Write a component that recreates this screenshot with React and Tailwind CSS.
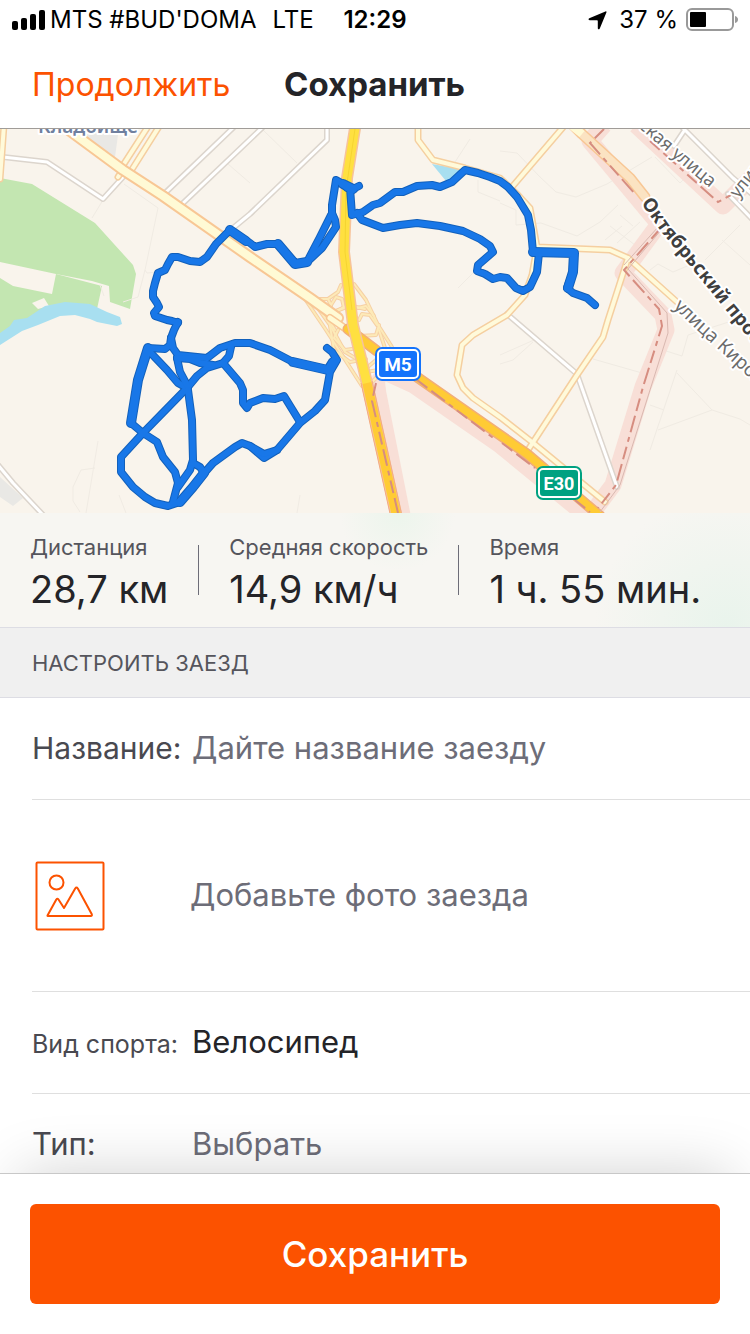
import React from "react";

const TRACKS = [
  "M178 323L172 321L167 320L155 316L154 313L159 307L157 303L153 297L153 291L155 283L158 273L165 270L168 264L172 257L178 257L190 261L200 262L207 257L216 244L224 236L230 230L250 243L255 247L267 244L278 244L295 264L307 262L320 237L332 213L332 205L336 180L343 184L347 188L353 189L359 186",
  "M307 262L322 248L336 227L335 220L332 213",
  "M350 188L352 215L363 212L373 205L380 203L395 192L403 192L417 186L432 185L440 187L452 182L465 170L478 173L490 177L500 181L508 187L517 197L528 215L531 230L533 252L574 253L573 272L567 288L573 293L587 298L595 305",
  "M539 253L537 272L530 287L523 291L516 288L507 278L500 277L493 279L485 274L477 271L478 265L493 252L490 246L480 239L463 231L440 226L417 223L400 225L383 228L362 220L357 213",
  "M178 322L174 330L171 338L170 345L165 349L148 348L143 364L138 380L131 423L143 433L157 442L163 457L175 472L178 483L173 502",
  "M171 338L173 348L178 355L207 358L220 348L235 343L250 343L270 350L293 362L328 370",
  "M327 348L332 352L337 360L330 372L325 400L315 411L300 423L277 450L264 458L250 446L242 443L235 447L213 463L206 471L193 487L180 502L168 506L155 503L145 497L133 487L121 472L121 457L143 433L187 388L197 376L207 368L223 363L229 356L231 347",
  "M148 350L167 370L178 383L187 388",
  "M177 358L180 372L188 387",
  "M177 358L190 359L200 363L213 365",
  "M188 390L192 420L193 460L190 470L178 487",
  "M193 463L200 467L204 473",
  "M223 363L240 383L243 390L243 403L247 408L250 403L263 398L275 399L284 396L300 422",
  "M250 446L264 454L277 450",
];

const WIDE_TRACKS = [
  "M533 252L574 253L573 272L568 288",
  "M148 348L143 364L138 380L131 423",
  "M204 473L193 487L180 502",
  "M293 362L328 370L333 362",
  "M230 230L246 241",
  "M278 244L295 264L307 262",
  "M343 184L353 189",
];

const WHITE_ROADS = [
  "M3 157L47 162L103 199L123 177",
  "M163 195L236 125",
  "M180 206L265 125",
  "M233 228L250 214L327 140L327 125",
  "M-2 465L13 483L44 516",
  "M507 314L577 374L617 487",
  "M680 125L733 178L752 194",
  "M684 131L674 146",
  "M728 194L752 219",
];

const MINOR_ROADS = [
  "M4 125L0 179",
  "M120 170L149 125",
  "M131 171L160 125",
  "M118 177L124 168",
  "M418 125L418 140L433 160L465 168L500 178L518 195L530 208L537 247L610 250L628 258L677 302",
  "M565 125L512 187",
  "M537 247L532 275L525 295L507 315L473 335L462 345L457 375L463 388L473 398L500 417L532 442L605 502",
  "M528 450L577 375L603 337L608 320L628 258",
];

const RAMPS = [
  "M341 285L338 292L328 299L312 299",
  "M305 299L326 330L362 386",
  "M313 301L330 325L345 352L362 362",
  "M328 299L331 305L329 320L335 330",
  "M331 305L336 297L342 299L344 308L333 312",
  "M354 284L366 300L378 325L392 347",
  "M358 308L366 306L374 316",
  "M359 320L362 314L370 315L377 325",
  "M337 311L348 305L365 309",
  "M330 326L334 350L350 362L366 359",
  "M338 330L334 338L345 350L352 349",
  "M360 336L376 335L379 325",
  "M362 372L376 360L385 348L379 330",
  "M366 372L385 369",
  "M370 384L380 374",
];

const FAINT = [
  "M103 200L92 218M124 184L158 208L145 270L147 273L158 272M123 302L138 297L145 270M100 285L104 296",
  "M98 441L86 513M95 468L81 470L73 487L73 501L80 512M119 495L126 513M263 130L297 163M228 164L250 183",
  "M300 495L297 513M470 139L455 162M500 151L517 153L540 177L556 192L576 197L607 184L652 157M500 203L516 210L516 225L541 223L577 236L600 222L618 205",
  "M458 288L476 270M478 180L478 192L500 201M500 355L534 340M500 364L513 360L533 342M593 359L642 373",
  "M663 350L682 356M677 370L650 450M650 405L664 410M677 373L712 410L740 419L750 425M712 410L658 430M682 356L688 335L735 320",
  "M610 226L635 245M620 215L633 226M605 240L622 226M617 243L640 222M650 270L658 264L673 272L692 264M722 240L750 265M740 225L705 260M655 157L680 183L693 170",
];

function Roads({ paths, casing, fill, outer, inner }) {
  return (
    <g fill="none" strokeLinejoin="round" strokeLinecap="round">
      {paths.map((d) => (
        <path key={"c" + d} d={d} stroke={casing} strokeWidth={outer} />
      ))}
      {paths.map((d) => (
        <path key={"f" + d} d={d} stroke={fill} strokeWidth={inner} />
      ))}
    </g>
  );
}

function RouteMap() {
  return (
    <svg
      viewBox="0 129 750 384"
      preserveAspectRatio="xMidYMid slice"
      className="block h-96 w-full bg-[#f9f4ec]"
      role="img"
      aria-label="Карта заезда"
    >
      <defs>
        <path id="street-october" d="M641 203L662 233L690 266L760 352" />
        <path id="street-upper" d="M638 127L674 158L740 213" />
        <path id="street-kirov" d="M673 307L700 333L770 396" />
        <path id="street-side" d="M738 199L775 152" />
      </defs>

      <g fill="#e9e8e5">
        <path d="M78 129L118 129L118 135L115 157L85 137Z" />
        <path d="M0 477L23 498L13 506L0 497Z" />
      </g>
      <g fill="#c3e6b1">
        <path d="M0 178L32 184L95 223L133 265L136 274L130 309L110 302L109 286L92 281L56 274L0 262Z" />
        <path d="M56 274L102 286L97 309L66 306L40 316L0 336L0 278L13 286L52 294Z" />
      </g>
      <path fill="#f9f4ec" d="M38 309L32 303L44 298L49 306Z" />
      <path
        fill="#a8dff0"
        d="M0 333L10 326L14 320L27 318L45 306L65 302L90 304L107 312L120 317L122 324L117 326L97 322L90 319L75 315L60 316L38 325L22 331L0 345Z"
      />
      <path fill="#a8dff0" d="M432 164L460 169L457 181L446 181Z" />

      <g fill="none" stroke="#f0ebe3" strokeWidth="1">
        {FAINT.map((d) => (
          <path key={d} d={d} />
        ))}
      </g>

      <g fill="none" stroke="#f8dfd7" strokeLinejoin="round">
        <path strokeWidth="17" d="M604 125L590 141L659 224L623 273L663 315L666 330L643 387L613 485L592 513" />
        <path strokeWidth="17" d="M636 125L723 206L755 174" />
        <path strokeWidth="17" d="M376 384L403 520" />
        <path strokeWidth="20" d="M380 368L415 384L500 443L588 515" />
        <path strokeWidth="14" d="M380 410L378 380L384 372" />
      </g>

      <Roads paths={WHITE_ROADS} casing="#dcd5cd" fill="#ffffff" outer={6} inner={3} />
      <Roads paths={RAMPS} casing="#f6d0a4" fill="#fdeab8" outer={4} inner={2} />
      <Roads paths={MINOR_ROADS} casing="#f5cfa0" fill="#fffada" outer={7} inner={4} />
      <Roads paths={["M62 125L123 170L163 196L250 257L310 298L338 318"]} casing="#f8c795" fill="#fffad5" outer={12} inner={8} />
      <Roads paths={["M330 318L346 329"]} casing="#f8c795" fill="#fffad5" outer={8} inner={5} />
      <Roads paths={["M348 329L377 351L417 377L500 435L527 454L600 516"]} casing="#f2ae78" fill="#ffcb35" outer={11} inner={8} />
      <Roads paths={["M356 122L347 178L344 252L353 325L367 383L397 518"]} casing="#f7c39a" fill="#ffe040" outer={12} inner={9} />
      <path fill="none" stroke="#ffcb35" strokeWidth="9" d="M367 383L397 518" />
      <path fill="none" stroke="#f3ab80" strokeWidth="1" d="M361 383L391 518M372 381L402 516" />
      <path fill="none" stroke="#f5d431" strokeWidth="1" d="M355 129L346 190L345 252L352 310" />
      <Roads paths={["M570 122L582 134L630 178L645 197"]} casing="#f8c795" fill="#fbe3c2" outer={11} inner={8} />
      <path fill="none" stroke="#fffad5" strokeWidth="8" d="M567 122L582 134" />

      <g fill="none" stroke="#d9b8b0" strokeWidth="1">
        <path d="M662 229L628 269L667 313L668 333L620 485L600 512" />
        <path d="M659 226L624 265" />
      </g>
      <g fill="none" stroke="#d68d80" strokeWidth="2" strokeDasharray="13 5 17 5 5 5">
        <path d="M604 129L590 143L636 195" />
        <path d="M660 229L624 270L659 309L662 326L643 387L616 485L598 508" />
        <path d="M650 141L718 202L731 195" />
        <path d="M376 383L372 401L398 513" />
        <path d="M417 380L496 440M502 443L535 468M575 500L590 512" />
      </g>

      <g fill="none" strokeLinecap="round" strokeLinejoin="round">
        {TRACKS.map((d) => (
          <path key={"o" + d} d={d} stroke="#1260bb" strokeWidth="8" />
        ))}
        {WIDE_TRACKS.map((d) => (
          <path key={"wo" + d} d={d} stroke="#1260bb" strokeWidth="10" />
        ))}
        {TRACKS.map((d) => (
          <path key={"i" + d} d={d} stroke="#1877e8" strokeWidth="6" />
        ))}
        {WIDE_TRACKS.map((d) => (
          <path key={"wi" + d} d={d} stroke="#1877e8" strokeWidth="8" />
        ))}
      </g>

      <g fontFamily='"Noto Sans", sans-serif' stroke="#ffffff" strokeWidth="4" strokeLinejoin="round" paintOrder="stroke">
        <text x="38" y="133" fontSize="19" fontWeight="600" fill="#70809f">Кладбище</text>
        <text fontSize="19" fontWeight="700" fill="#3f3f3f">
          <textPath href="#street-october">Октябрьский проспект</textPath>
        </text>
        <text fontSize="18" fill="#6c6c6c">
          <textPath href="#street-upper">ская улица</textPath>
        </text>
        <text fontSize="19" fill="#6c6c6c">
          <textPath href="#street-kirov">улица Кирова</textPath>
        </text>
        <text fontSize="18" fill="#6c6c6c">
          <textPath href="#street-side">улица</textPath>
        </text>
      </g>

      <g>
        <rect x="375" y="347" width="46" height="34" rx="7" fill="#1473fb" />
        <rect x="378" y="350" width="40" height="28" rx="4" fill="none" stroke="#ffffff" strokeWidth="2" />
        <text x="398" y="371" fontSize="19" fontWeight="700" fontFamily="Roboto, sans-serif" textAnchor="middle" fill="#ffffff">M5</text>
        <rect x="536" y="466" width="46" height="34" rx="7" fill="#00a181" />
        <rect x="539" y="469" width="40" height="28" rx="4" fill="none" stroke="#ffffff" strokeWidth="2" />
        <text x="559" y="490" fontSize="18" fontWeight="700" fontFamily="Roboto, sans-serif" textAnchor="middle" fill="#ffffff">E30</text>
      </g>
    </svg>
  );
}

function StatusBar() {
  return (
    <div className="flex h-10 items-center px-3 text-[24px] leading-10 text-black">
      <div className="flex flex-1 items-center whitespace-nowrap">
        <svg width="34" height="20" viewBox="0 0 34 20" aria-hidden="true">
          <rect x="0" y="11" width="6" height="9" rx="2" />
          <rect x="9" y="8" width="6" height="12" rx="2" />
          <rect x="18" y="4" width="6" height="16" rx="2" />
          <rect x="27" y="0" width="6" height="20" rx="2" />
        </svg>
        <span className="ml-1">MTS #BUD'DOMA</span>
        <span className="ml-4">LTE</span>
      </div>
      <div className="font-semibold">12:29</div>
      <div className="flex flex-1 items-center justify-end whitespace-nowrap">
        <svg width="19" height="19" viewBox="0 0 19 19" aria-hidden="true">
          <path d="M17.4 0.4Q18.9 0 18.4 1.500L11.800 17.400Q10.600 19.200 9.800 17.400V10Q9.800 9.200 9 9.200H1.600Q-0.500 8.600 1.300 7.200Z" />
        </svg>
        <span className="ml-3">37 %</span>
        <svg className="ml-2" width="52" height="24" viewBox="0 0 52 24" aria-hidden="true">
          <rect x="1" y="1" width="46" height="21" rx="5" fill="none" stroke="#999999" strokeWidth="2" />
          <rect x="4" y="4" width="16" height="15" rx="1" />
          <path d="M49 8Q52 9 52 11.500Q52 14 49 15Z" fill="#999999" />
        </svg>
      </div>
    </div>
  );
}

function Stat({ label, value }) {
  return (
    <div className="whitespace-nowrap">
      <dt className="text-[22px] leading-7 text-[#55555c]">{label}</dt>
      <dd className="mt-1 text-[38px] leading-[48px] text-[#242428]">{value}</dd>
    </div>
  );
}

export default function App() {
  return (
    <div className="flex min-h-screen w-full flex-col overflow-x-hidden bg-white font-['Inter',sans-serif] text-[#242428]">
      <StatusBar />
      <header className="flex h-[89px] items-center border-b border-[#a09c98] px-8 pt-0.5">
        <button type="button" className="w-[252px] text-left text-[32px] text-[#fc5200]">Продолжить</button>
        <h1 className="text-[33px] font-bold">Сохранить</h1>
      </header>

      <RouteMap />

      <dl className="flex h-[115px] border-b border-[#dddde4] bg-[#f7f6f2] bg-[radial-gradient(circle_at_53%_0%,#ecf5ec_0%,transparent_14%),radial-gradient(circle_at_97%_100%,#e9f4ec_0%,transparent_18%)] px-[30px] pt-5">
        <Stat label="Дистанция" value="28,7 км" />
        <div className="mx-[30px] mt-3 h-[50px] w-px bg-[#6d6d78]" />
        <Stat label="Средняя скорость" value="14,9 км/ч" />
        <div className="mx-[30px] mt-3 h-[50px] w-px bg-[#6d6d78]" />
        <Stat label="Время" value="1 ч. 55 мин." />
      </dl>

      <main className="flex flex-1 flex-col">
        <h2 className="flex h-[70px] items-center border-b border-[#dddde4] bg-[#f0f0f0] px-8 pt-0.5 text-[22px] text-[#55555c]">
          НАСТРОИТЬ ЗАЕЗД
        </h2>

        <div className="ml-8 flex h-[102px] items-center border-b border-[#dfdfdf]">
          <label htmlFor="ride-title" className="w-40 shrink-0 text-[30px] text-[#494950]">Название:</label>
          <input
            id="ride-title"
            type="text"
            placeholder="Дайте название заезду"
            className="min-w-0 flex-1 bg-transparent text-[31px] outline-none placeholder:text-[#6d6d78] placeholder:opacity-100"
          />
        </div>

        <button type="button" className="ml-8 flex h-48 items-center border-b border-[#dfdfdf] text-left text-[31px] text-[#6d6d78]">
          <span className="w-[158px] shrink-0">
            <svg className="ml-[3px]" width="70" height="70" viewBox="0 0 70 70" fill="none" stroke="#fc5200" strokeWidth="2" strokeLinejoin="round" aria-hidden="true">
              <rect x="1.500" y="1.500" width="67" height="67" rx="1" />
              <circle cx="21.500" cy="21.500" r="7" />
              <path d="M12.500 54.500L21.300 38.500Q22.400 37 23.500 38.500L29 47L40.200 27.500Q41.500 25.500 42.800 27.500L56.800 53.200Q57.300 55 55.800 55H13.500Q12 55 12.500 54.500Z" />
            </svg>
          </span>
          Добавьте фото заезда
        </button>

        <div className="ml-8 flex h-[102px] items-center border-b border-[#dfdfdf]">
          <label htmlFor="ride-sport" className="w-40 shrink-0 pt-1 text-[25px] text-[#494950]">Вид спорта:</label>
          <select id="ride-sport" className="min-w-0 flex-1 appearance-none bg-transparent text-[31px] text-[#242428] outline-none">
            <option>Велосипед</option>
          </select>
        </div>

        <div className="ml-8 flex h-[79px] items-end pb-1.5">
          <label htmlFor="ride-type" className="w-40 shrink-0 text-[31px] text-[#494950]">Тип:</label>
          <select id="ride-type" className="min-w-0 flex-1 appearance-none bg-transparent text-[31px] text-[#6d6d78] outline-none">
            <option>Выбрать</option>
          </select>
        </div>
      </main>

      <footer className="sticky bottom-0 border-t border-[#c8c8c8] bg-white p-[30px] shadow-[0_-20px_60px_-20px_rgba(0,0,0,0.18)]">
        <button type="button" className="h-[100px] w-full rounded-[6px] bg-[#fc5200] text-[35px] font-medium text-white">
          Сохранить
        </button>
      </footer>
    </div>
  );
}
